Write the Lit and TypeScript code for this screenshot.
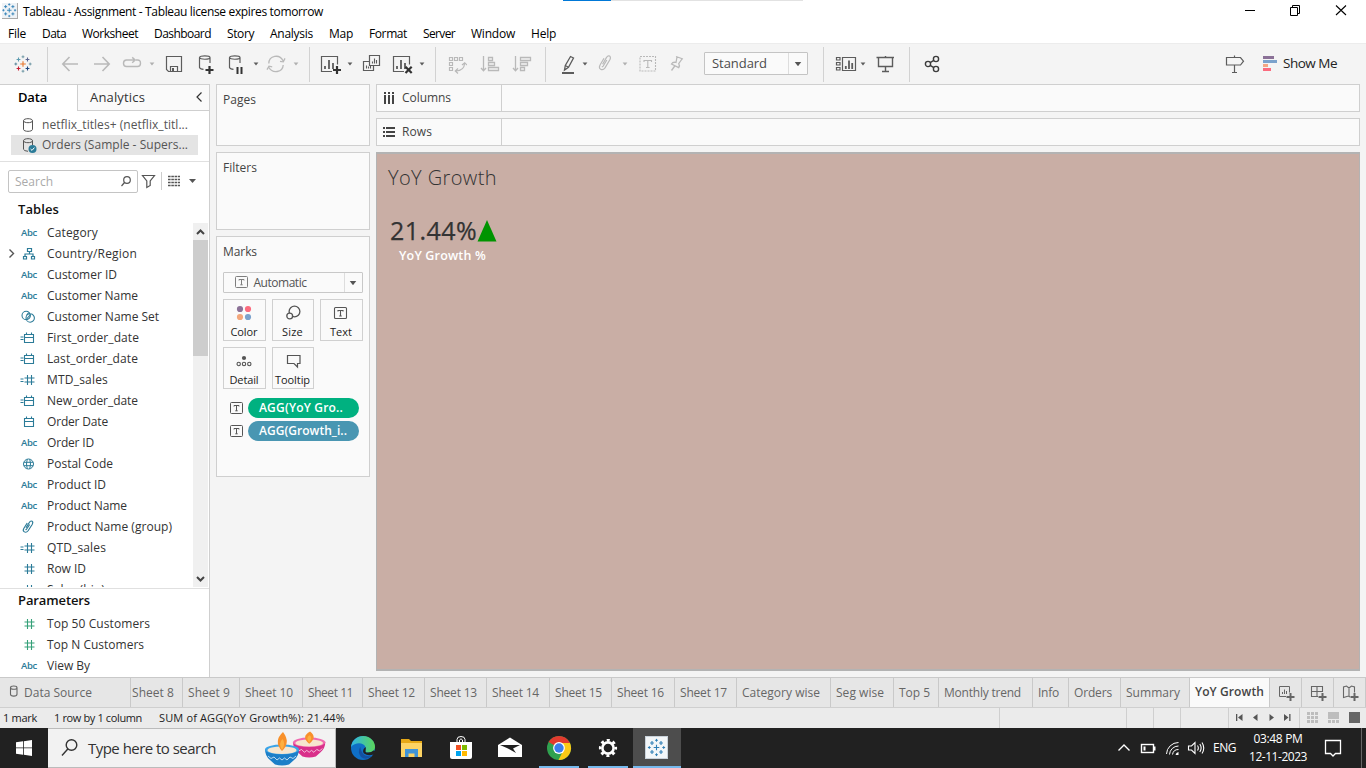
import { LitElement, html, css, svg, nothing } from "lit";
import { customElement, property } from "lit/decorators.js";

/** One line of text whose tracking is adjusted so that it fills a set width. */
@customElement("fit-text")
class FitText extends LitElement {
  static styles = css`
    :host { display: inline-block; white-space: pre; flex: none; }
    span { display: inline-block; }
  `;
  @property() text = "";
  @property({ type: Number }) w = 0;
  render() { return html`<span>${this.text}</span>`; }
  updated() {
    const el = this.renderRoot.querySelector("span") as HTMLElement;
    el.style.letterSpacing = "0";
    const natural = el.getBoundingClientRect().width;
    if (this.w && natural) el.style.letterSpacing = `${(this.w - natural) / this.text.length}px`;
  }
}

const t = (text: string, w: number) => html`<fit-text .text=${text} .w=${w}></fit-text>`;
const ic = (w: number, h: number, body: unknown, cls = "") =>
  html`<svg class="ic ${cls}" width=${w} height=${h} viewBox="0 0 ${w} ${h}">${body}</svg>`;
const p = (d: string, sw = 1.2) => svg`<path d=${d} stroke-width=${sw} />`;
const f = (d: string, fill = "currentColor") => svg`<path d=${d} fill=${fill} stroke="none" />`;

const cross = (x: number, y: number, r: number, color: string, sw = 1.2) =>
  svg`<path d="M${x - r} ${y}h${2 * r}M${x} ${y - r}v${2 * r}" stroke=${color} stroke-width=${sw} />`;
const logo = (c: string[]) => svg`
  ${cross(9, 9, 2.8, c[0], 1.1)}
  ${cross(4.5, 4.5, 1.9, c[1], 1.1)}${cross(13.5, 4.5, 1.9, c[2], 1.1)}
  ${cross(4.5, 13.5, 1.9, c[3], 1.1)}${cross(13.5, 13.5, 1.9, c[4], 1.1)}
  ${cross(9, 1.8, 1.4, c[5], 1)}${cross(9, 16.2, 1.4, c[5], 1)}
  ${cross(1.8, 9, 1.4, c[6], 1)}${cross(16.2, 9, 1.4, c[5], 1)}`;
const BLUE = Array(7).fill("#2f7fb5");

const caret = ic(6, 24, f("M0.6 10.6h4.8L3 13.6z"));
const cylinder = "M1.5 5.5C1.5 3.2 12 3.2 12 5.5S1.5 7.8 1.5 5.5V15.5Q2 17 5.5 17.4M12 5.5V11";
const chart = "M12 19.5H1.5V4.5H17.5V12.5";
const bars = "M5 17v-3M9 17V8M13 17v-6";
const clip = "M4.6 12.2L8.4 5.6Q10 3 11.6 4.1T11.7 8L7 15.9Q5 18.6 2.7 17.3T2.2 12.7L6 6.2M8.8 8L5.4 13.8Q4.6 15.2 3.9 14.4";

type Tool = [number, unknown, string?];
const DIV = html`<i class="vr"></i>`;
const TOOLS: Tool[] = [
  [14, ic(18, 24, svg`<g transform="translate(0 3)">${logo(["#e8762c", "#5c9bb0", "#5b6591", "#c72035", "#1f457e", "#7199a6", "#5b879b"])}</g>`)],
  [15, DIV],
  [13, ic(18, 24, p("M1.8 12H17M8.5 5L1.8 12L8.5 19", 1.6)), "off"],
  [14, ic(18, 24, p("M1 12H16.2M9.5 5L16.2 12L9.5 19", 1.6)), "off"],
  [11, ic(20, 24, p("M12 8H4.5Q1.5 8 1.5 11.2T4.5 14.5H15.5Q18.5 14.5 18.5 11.2T15.5 8H14M10.2 5.4L13.2 8L10.2 10.8", 1.4)), "off"],
  [7, caret, "off2"],
  [10, ic(18, 24, svg`${p("M1.5 4.5H16.5V19.5H3.5L1.5 17.5ZM5.5 19.5V14.5H12.5V19.5", 1.2)}${f("M7 16h2v3H7z")}`)],
  [15, ic(16, 24, svg`${p(cylinder)}${p("M11.5 14V22M7.5 18H15.5", 2.2)}`, "dk")],
  [14, ic(16, 24, svg`${p(cylinder)}${p("M9.5 15V22M13.5 15V22", 2)}`, "dk")],
  [9, caret],
  [7, ic(20, 24, p("M2.8 11.5C3 3.5 13.5 1.5 17 8.8M14 9.3L17.3 9.8L19 6.4M17.2 13C16.8 20.5 6.5 22 3 15.5M6.2 14.8L3 14.2L1 17.6", 1.3)), "off"],
  [7, caret, "off2"],
  [10, DIV],
  [10, ic(21, 24, svg`${p(chart)}${p(bars, 1.8)}${p("M17 14V22M13 18H21", 2.2)}`, "dk")],
  [6, caret],
  [9, ic(20, 24, svg`${p("M7.5 3.5H17.5V13.5H7.5ZM7.5 9.5H1.5V18.5H11.5V13.5")}${p("M10.5 11.5V9.5M12.5 11.5V6.5M14.5 11.5V8M4.5 16.5v-3M6.5 16.5v-2M8.5 16.5v-3", 1.1)}`)],
  [10, ic(21, 24, svg`${p(chart)}${p(bars, 1.8)}${p("M13.5 14.8L19.7 21M19.7 14.8L13.5 21", 2.2)}`, "dk")],
  [6, caret],
  [10, DIV],
  [12, ic(19, 24, svg`${p("M1.5 5.5h3v3h-3zM6.5 5.5h3v3h-3zM11.5 5.5h3v3h-3zM1.5 10.5h3v3h-3zM1.5 15.5h3v3h-3zM16.5 11V12Q16 18.5 8 19M14 13L16.7 10.7L19 13M10 16.5L7.3 19L10 21.5", 1.2)}`), "off"],
  [13, ic(20, 24, p("M3.5 4V18.5M1 16L3.5 18.7L6 16M8.5 5.5h4v3h-4zM8.5 10.5h6v3h-6zM8.5 15.5h10v3h-10z", 1.3)), "off"],
  [12, ic(20, 24, p("M3.5 4V18.5M1 16L3.5 18.7L6 16M8.5 5.5h10v3h-10zM8.5 10.5h7v3h-7zM8.5 15.5h4v3h-4z", 1.3)), "off"],
  [13, DIV],
  [15, ic(14, 24, svg`${p("M9.5 4.5L12.5 6L7.5 15.2L3.5 18L4.3 13.5ZM4.3 13.5L7.5 15.2M3 18.6L5 16.8", 1.3)}${p("M1 21H13", 2)}`)],
  [7, caret],
  [10, ic(14, 24, p(clip, 1.2)), "off"],
  [10, caret, "off2"],
  [11, ic(18, 24, svg`<rect x="1" y="4.5" width="15.5" height="14.5" stroke-width="1.1" stroke-dasharray="2 1" />${p("M5 10V8.5H12.5V10M8.8 8.5V15.5M7 15.5h3.6", 1.1)}`), "off"],
  [13, ic(14, 24, p("M6 4.5L13 7M7 5L6 10.5Q3 9.5 1.5 12L8.7 15.7Q10 13.5 8.7 11.7L12 7M4.8 14L1.5 18.5", 1.3)), "off"],
  [20, html`<div class="combo">${t("Standard", 55)}<b>${caret}</b></div>`],
  [15, DIV],
  [11, ic(22, 24, svg`${p("M1.5 5.5h3.5v2.5h-3.5zM1.5 10.5h3.5v2.5h-3.5zM1.5 15.5h3.5v2.5h-3.5zM7.5 5.5H20.5V18.5H7.5Z")}${p("M10.8 17v-3M14 17V8.5M17.2 17v-6", 1.8)}`)],
  [3, caret],
  [10, ic(20, 24, p("M.5 5.5H18M2.5 5.5V14.5H16.5V5.5M9.5 4V5M9.5 14.5V19.5M6 19.5H13", 1.4))],
  [13, DIV],
  [14, ic(16, 24, svg`<circle cx="4" cy="12" r="2.6" stroke-width="1.4" /><circle cx="12" cy="7" r="2.6" stroke-width="1.4" /><circle cx="12" cy="17" r="2.6" stroke-width="1.4" />${p("M6.2 10.6L9.8 8.4M6.2 13.4L9.8 15.6", 1.4)}`, "blk")],
  [285, ic(20, 24, p("M9.5 3.5V5.5M9.5 13V20.5M7 20.5H12M1.5 5.5H15.5L18.5 9.2L15.500 13H1.5Z", 1.2))],
  [18, ic(14, 24, svg`${f("M0 4h11v3H0z", "#8b7197")}${f("M0 8h14v3H0z", "#7ba2cc")}${f("M0 12h5v3H0z", "#f3a683")}${f("M0 16h8v3H0z", "#fb6b7e")}`)],
  [6, html`<span class="show">${t("Show Me", 54)}</span>`],
];

const MENU: [string, number, number][] = [
  ["File", 8, 18], ["Data", 16, 24], ["Worksheet", 16, 56], ["Dashboard", 16, 57], ["Story", 16, 27],
  ["Analysis", 16, 43], ["Map", 16, 24], ["Format", 16, 38], ["Server", 16, 32], ["Window", 16, 44], ["Help", 16, 25],
];

const hash = "M10.5 4V14M14.5 4V14M7.5 7H17.5M7.5 11H17.5";
const cal = "M7.5 5.5H16.5V13.5H7.5ZM7.5 8.5H16.5M9.5 3.5V5.5M14.5 3.5V5.5";
const eq = "M3.5 8h3M3.5 10.5h3";
const GLYPH: Record<string, unknown> = {
  abc: html`<span class="abc">${t("Abc", 16)}</span>`,
  tree: ic(20, 18, p("M10.5 3.5h4v3h-4zM6.5 11.5h3v2.5h-3zM14.5 11.5h3v2.5h-3zM12.5 6.5V9M8 11.5V9H16V11.5")),
  set: ic(20, 18, p("M5 7.5a4.2 4.2 0 1 0 8.4 0a4.2 4.2 0 1 0-8.4 0M9 10a4.2 4.2 0 1 0 8.4 0a4.2 4.2 0 1 0-8.4 0M9.300 7.500l2-2.500M10 10.500l3.500-4", 1.1)),
  cal: ic(20, 18, p(cal, 1.1)),
  ecal: ic(20, 18, p(cal + eq, 1.1)),
  num: ic(20, 18, p(hash, 1.1)),
  enum: ic(20, 18, p(hash + eq, 1.1)),
  globe: ic(20, 18, p("M6.5 9a5 5 0 1 0 10 0a5 5 0 1 0-10 0M7 7.3H16M7 10.7H16M10.2 4.2Q8.8 9 10.2 13.8M12.8 4.2Q14.2 9 12.8 13.8", 1)),
  clip: ic(20, 18, svg`<g transform="translate(5 0) scale(.87 .8)">${p(clip, 1.3)}</g>`),
};
const FIELDS: [string, string, number][] = [
  ["abc", "Category", 51], ["tree", "Country/Region", 90], ["abc", "Customer ID", 70], ["abc", "Customer Name", 91],
  ["set", "Customer Name Set", 112], ["ecal", "First_order_date", 92], ["ecal", "Last_order_date", 91], ["enum", "MTD_sales", 61],
  ["ecal", "New_order_date", 91], ["cal", "Order Date", 61], ["abc", "Order ID", 47], ["globe", "Postal Code", 66],
  ["abc", "Product ID", 59], ["abc", "Product Name", 80], ["clip", "Product Name (group)", 125], ["enum", "QTD_sales", 59],
  ["num", "Row ID", 39], ["enum", "Sales (bin)", 58],
];
const PARAMS: [string, string, number][] = [["num", "Top 50 Customers", 103], ["num", "Top N Customers", 97], ["abc", "View By", 43]];

// name, tab width, space before the text, text width
const TABS: [string, number, number, number][] = [
  ["Sheet 8", 52, 1, 42], ["Sheet 9", 57, 5, 42], ["Sheet 10", 63, 5, 48], ["Sheet 11", 60, 5, 45], ["Sheet 12", 62, 5, 47],
  ["Sheet 13", 62, 5, 47], ["Sheet 14", 63, 5, 47], ["Sheet 15", 62, 5, 47], ["Sheet 16", 63, 5, 47], ["Sheet 17", 62, 5, 47],
  ["Category wise", 94, 5, 78], ["Seg wise", 63, 5, 48], ["Top 5", 45, 5, 31], ["Monthly trend", 94, 5, 77], ["Info", 36, 5, 21],
  ["Orders", 52, 5, 38], ["Summary", 69, 5, 54],
];

const tBox = ic(13, 12, svg`<rect x=".5" y=".5" width="12" height="11" rx="1" stroke-width="1" />${p("M4 4.5V3.5H9V4.5M6.5 3.5V8.8M5.3 8.8h2.4", 1)}`);
const plusBox = "M12.5 9V17M8.5 13H16.5";

@customElement("app-root")
class AppRoot extends LitElement {
  static styles = css`
    :host { display: flex; flex-direction: column; width: 1366px; height: 768px; overflow: hidden; background: #f4f4f4;
      font: 12px/20px "Open Sans", "Noto Sans", sans-serif; color: #333; }
    * { box-sizing: border-box; }
    svg { display: block; flex: none; fill: none; stroke: currentColor; }
    .title { display: flex; height: 23px; background: #fff; color: #000; position: relative; }
    .title .app { margin: 3px 5px 0 2px; background: #eef2f6; border-right: 1px solid #aaa; border-bottom: 1px solid #aaa; }
    .title .name { padding-top: 2px; flex: 1; }
    .strip { position: absolute; top: 0; left: 563px; display: flex; }
    .strip i { width: 48px; height: 1px; background: #0078d7; }
    .strip i + i { width: 192px; background: #e2e2e2; }
    .wins { display: flex; gap: 30px; padding: 3px 17px 0 0; }
    .menu { display: flex; height: 20px; padding-top: 1px; background: #fff; color: #000; }
    .tools { display: flex; height: 41px; padding-top: 8px; align-items: flex-start; color: #5c5c5c; border-top: 1px solid #ececec; flex: none; }
    .off { color: #b9b9b9; } .off2 { color: #b0b0b0; }
    .blk { color: #3c3c3c; }
    .dk path:last-child { stroke: #333; }
    .vr { display: block; width: 1px; height: 35px; background: #d2d2d2; margin-top: -5px; }
    .combo { display: flex; width: 104px; height: 23px; background: #fafafa; border: 1px solid #c4c4c4; border-radius: 1px; padding-left: 7px; font-size: 13px; line-height: 20px; justify-content: space-between; color: #4c4c4c; }
    .combo b { width: 19px; border-left: 1px solid #ddd; padding: 0 6px; display: flex; align-items: center; color: #555; }
    .combo b svg { transform: scale(1.35); }
    .show { font-size: 13.5px; line-height: 22px; color: #222; }
    .main { display: flex; height: 593px; flex: none; }
    .data { width: 210px; background: #fff; border-top: 1px solid #cfcfcf; border-right: 1px solid #cfcfcf; overflow: hidden; display: flex; flex-direction: column; }
    .heads { display: flex; height: 26px; flex: none; line-height: 25px; font-size: 13px; }
    .heads .on { width: 77px; padding-left: 18px; font-weight: 600; color: #000; }
    .heads .an { flex: 1; display: flex; justify-content: space-between; padding: 0 6px 0 12px; border-left: 1px solid #cfcfcf; border-bottom: 1px solid #cfcfcf; background: #fafafa; }
    .src { padding: 4px 11px 6px; height: 51px; border-bottom: 1px solid #e0e0e0; flex: none; color: #555; }
    .src div { display: flex; height: 20px; padding-left: 10px; gap: 5px; align-items: center; }
    .src .sel { background: #e4e4e4; }
    .find { display: flex; padding: 8px 0 0 8px; height: 31px; flex: none; align-items: flex-start; color: #555; }
    .box { display: flex; width: 130px; height: 23px; border: 1px solid #c4c4c4; border-radius: 2px; justify-content: space-between; padding: 0 6px; line-height: 22px; color: #aaa; }
    .box svg { color: #555; }
    .h { font-size: 13px; font-weight: 600; color: #111; padding-left: 18px; flex: none; }
    .tb { height: 29px; line-height: 32px; }
    .scroll { display: flex; height: 365px; flex: none; overflow: hidden; }
    .list { flex: 1; }
    .row { display: flex; height: 21px; align-items: center; color: #333; }
    .row .ex { width: 17px; padding-left: 8px; color: #555; }
    .row .gl { width: 30px; color: #2b7b98; display: flex; }
    .pr .row .gl { color: #35a078; } .pr .row:last-child .gl { color: #2b7b98; }
    .abc { font-size: 9.5px; font-weight: 600; padding-left: 4px; line-height: 18px; padding-top: 1px; }
    .bar { width: 15px; margin: 1px 1px 0 0; background: #f0f0f0; display: flex; flex-direction: column; color: #444; }
    .bar i { height: 116px; background: #cdcdcd; margin-bottom: auto; }
    .pr { border-top: 1px solid #e0e0e0; margin-top: 1px; }
    .pr .h { height: 24px; line-height: 23px; }
    .cards { width: 160px; padding-left: 6px; display: flex; flex-direction: column; gap: 6px; flex: none; color: #444; }
    .card { border: 1px solid #cfcfcf; background: #fafafa; padding: 5px 6px; flex: none; }
    .pages { height: 62px; } .filters { height: 78px; } .marks { height: 241px; }
    .type { display: flex; justify-content: space-between; height: 21px; margin-top: 10px; border: 1px solid #c8c8c8; line-height: 20px; padding-left: 11px; color: #555; border-radius: 1px; }
    .type > svg { margin: 3px 0 0; opacity: .75; }
    .type fit-text { margin-right: 32px; }
    .type b { width: 18px; border-left: 1px solid #ddd; padding-left: 5px; }
    .type b svg { margin-top: -2px; transform: scale(1.35); }
    .btns { display: grid; grid-template-columns: 43px 42px 43px; grid-auto-rows: 42px; gap: 6px; margin-top: 6px; }
    .btn { border: 1px solid #d0d0d0; display: flex; flex-direction: column; align-items: center; font-size: 11px; line-height: 16px; padding: 3px 1px 0 0; gap: 3px; color: #555; }
    .btn fit-text { color: #222; }
    .pill { display: flex; align-items: center; margin: 9px 0 0 7px; gap: 5px; color: #555; }
    .pill + .pill { margin-top: 3px; }
    .pill span { width: 111px; height: 20px; border-radius: 10px; background: #00b180; color: #fff; padding-left: 11px; line-height: 19px; font-weight: 600; }
    .pill .bl { background: #4996b2; }
    .sheet { flex: 1; padding: 0 6px; display: flex; flex-direction: column; gap: 6px; }
    .shelf { display: flex; height: 28px; border: 1px solid #cfcfcf; background: #fafafa; flex: none; line-height: 25px; color: #444; }
    .shelf div { width: 125px; border-right: 1px solid #cfcfcf; display: flex; gap: 6px; padding: 0 0 1px 6px; align-items: center; }
    .view { height: 519px; background: #c9aea5; border: 1px solid #b3b3b3; border-bottom-width: 2px; border-top-width: 2px; padding: 9px 0 0 11px; }
    .vt { font-size: 20px; line-height: 30px; font-weight: 300; color: #333; }
    .kpi { display: flex; height: 40px; margin-top: 18px; padding-left: 2px; font-size: 25px; line-height: 39px; color: #333; -webkit-text-stroke: .25px #333; }
    .kpi svg { margin-top: 9px; }
    .sub { color: #fff; font-size: 12.5px; font-weight: 600; line-height: 20px; padding-left: 11px; margin-top: -5px; }
    .tabs { display: flex; height: 31px; flex: none; border-top: 1px solid #c9c9c9; border-bottom: 1px solid #cfcfcf; background: #e6e6e6; color: #666; line-height: 29px; }
    .tabs > div { border-right: 1px solid #c9c9c9; flex: none; overflow: hidden; display: flex; }
    .ds { width: 131px; padding-left: 9px; gap: 5px; }
    .tabs .act { width: 80px; background: #fafafa; padding-left: 5px; font-weight: 600; color: #444; line-height: 27px; }
    .tabs .nw { width: 32px; padding: 6px 0 0 8px; }
    .status { display: flex; height: 20px; flex: none; background: #ebebeb; font-size: 11px; line-height: 19px; color: #222; }
    .s0 { width: 999px; padding-left: 3px; display: flex; gap: 17px; }
    .status > i { border-left: 1px solid #cfcfcf; width: 27px; } .status > i:first-of-type { width: 127px; } .status > .w48 { width: 48px; }
    .nav { border-left: 1px solid #cfcfcf; width: 71px; color: #555; padding-top: 1px; }
    .vw { border-left: 1px solid #cfcfcf; }
    .task { display: flex; height: 40px; flex: none; background: #212121; color: #fff; }
    .start { width: 48px; padding: 12px 0 0 16px; }
    .tsearch { width: 288px; height: 40px; background: #f2f2f2; border: 1px solid #bbb; border-left: 0; color: #333; display: flex; font-size: 15px; line-height: 39px; padding-left: 13px; }
    .tsearch fit-text { margin: 0 auto 0 10px; }
    .apps { display: flex; margin-left: 3px; }
    .apps div { width: 48.75px; height: 40px; padding: 7px 0 0 12px; flex: none; }
    .apps .run { box-shadow: inset 0 -2px #76b9ed; width: 40px; margin: 0 4px 0 5px; padding-left: 7px; }
    .apps .cur { box-shadow: inset 0 -2px #76b9ed; background: #4d4d4d; width: 48px; margin-left: 1px; padding-left: 11px; }
    .tray { margin-left: auto; display: flex; align-items: center; }
    .tray > svg { margin-right: 8px; }
    .clock { display: flex; flex-direction: column; align-items: center; line-height: 18px; margin: 0 17px 0 13px; }
    .tray > .note { margin-right: 0; }
    .end { width: 5px; height: 40px; border-left: 1px solid #666; margin-left: 19px; }
  `;

  row([g, n, w]: [string, string, number]) {
    return html`<div class="row"><span class="ex">${g === "tree" ? ic(7, 9, p("M1.5 .5L5.5 4.5L1.5 8.5", 1.4)) : nothing}</span><span class="gl">${GLYPH[g]}</span>${t(n, w)}</div>`;
  }

  lamp(x: number, y: number, s: number, a: string, b: string, flame: number) {
    return svg`<g stroke="none" transform="translate(${x} ${y}) scale(${s})">
      <path d="M0 3Q0 10 5 14L10 18.500Q17 20.500 24 18.500L29 14Q34 10 34 3Q17 9 0 3" fill=${a} />
      <ellipse cx="17" cy="3.500" rx="17" ry="5" fill=${b} /><ellipse cx="17" cy="4.200" rx="14.500" ry="3.800" fill="#f6e6cf" />
      <path d="M17 5Q8 ${-flame / 3} 18 ${-flame}Q26 ${-flame / 4} 17 5" fill="#f8902a" />
      <path d="M17 4Q13 ${-flame / 5} 17.500 ${-flame / 2}Q21 ${-flame / 5} 17 4" fill="#fdb040" />
      <path d="M3 10l3 2.500 3-1.500 3 3 2.500-2 2.500 2 2.500-2 2.500 2 3-3 3 1.500 3-2.500" fill="none" stroke="#fff" stroke-width="1" opacity=".7" /></g>`;
  }

  render() {
    return html`
      <div class="title">
        <div class="strip"><i></i><i></i></div>
        ${ic(16, 16, svg`<g transform="scale(.86)">${logo(BLUE)}</g>`, "app")}
        <span class="name">${t("Tableau - Assignment - Tableau license expires tomorrow", 300)}</span>
        <div class="wins">
          ${ic(16, 16, p("M4 7.5H14", 1))}
          ${ic(16, 16, p("M3.5 4.5H10.5V12.5H3.5ZM5.5 4.5V2.5H12.5V10.5H10.5", 1))}
          ${ic(16, 16, p("M3 2.500L13 12M13 2.500L3 12", 1.1))}
        </div>
      </div>
      <div class="menu">${MENU.map(([n, g, w]) => html`<span style="margin-left:${g}px">${t(n, w)}</span>`)}</div>
      <div class="tools">${TOOLS.map(([g, c, k]) => html`<div class=${k ?? ""} style="margin-left:${g}px">${c}</div>`)}</div>

      <div class="main">
        <div class="data">
          <div class="heads">
            <div class="on">${t("Data", 29)}</div>
            <div class="an">${t("Analytics", 55)}${ic(8, 22, p("M6.5 7.5L2 12L6.5 16.5", 1.2))}</div>
          </div>
          <div class="src">
            <div>${ic(16, 16, p("M2.5 3.7C2.5 1 11.5 1 11.5 3.7S2.5 6.3 2.5 3.7V12.3C2.5 15 11.5 15 11.5 12.3V3.7", 1))}${t("netflix_titles+ (netflix_titl...", 146)}</div>
            <div class="sel">${ic(16, 16, svg`${p("M2.5 3.7C2.5 1 11.5 1 11.5 3.7S2.5 6.3 2.5 3.7V12.3Q3 14 7 14.3M11.5 3.7V8", 1)}<circle cx="11.5" cy="12" r="4" fill="#2b7b98" stroke="none" /><path d="M9.6 12l1.4 1.4 2.4-2.8" stroke="#fff" />`)}${t("Orders (Sample - Supers...", 146)}</div>
          </div>
          <div class="find">
            <div class="box">${t("Search", 38)}${ic(10, 22, svg`<circle cx="6" cy="9" r="3.3" stroke-width="1.2" />${p("M3.5 11.5L.5 15")}`)}</div>
            ${ic(70, 22, svg`${p("M4.5 5.5H16.5L12.2 11V15.5L8.8 17.5V11Z", 1.2)}<path d="M23.5 2V20" stroke="#ccc" /><path d="M30 6.5H42M30 9.5H42M30 12.5H42M30 15.5H42" stroke-dasharray="2.600 .7" stroke-width="1.300" />${f("M51 9h7l-3.5 4z")}`)}
          </div>
          <div class="h tb">${t("Tables", 41)}</div>
          <div class="scroll">
            <div class="list">${FIELDS.map((r) => this.row(r))}</div>
            <div class="bar">${ic(15, 17, p("M4 11L7.5 7.500L11 11", 2))}<i></i>${ic(15, 17, p("M4 7L7.5 10.5L11 7", 2))}</div>
          </div>
          <div class="pr"><div class="h">${t("Parameters", 72)}</div><div>${PARAMS.map((r) => this.row(r))}</div></div>
        </div>

        <div class="cards">
          <div class="card pages">${t("Pages", 33)}</div>
          <div class="card filters">${t("Filters", 34)}</div>
          <div class="card marks">
            ${t("Marks", 34)}
            <div class="type">${tBox}${t("Automatic", 53)}<b>${caret}</b></div>
            <div class="btns">
              <div class="btn">${ic(16, 18, svg`<g stroke="none"><circle cx="4" cy="6" r="3.1" fill="#8b7197" /><circle cx="12" cy="6" r="3.1" fill="#fb6b7e" /><circle cx="4" cy="14" r="3.1" fill="#f3a77c" /><circle cx="12" cy="14" r="3.1" fill="#7ba2cc" /></g>`)}${t("Color", 27)}</div>
              <div class="btn">${ic(16, 18, svg`<circle cx="9.500" cy="8.500" r="5.4" stroke-width="1.3" /><circle cx="4.7" cy="13" r="2.9" fill="#fafafa" stroke-width="1.3" />`)}${t("Size", 21)}</div>
              <div class="btn">${ic(16, 18, svg`<rect x="1.5" y="4.5" width="12" height="11" rx="1" stroke-width="1.1" />${p("M5 8.5V7.5H10V8.5M7.5 7.5V13M6.2 13h2.6", 1.1)}`)}${t("Text", 22)}</div>
              <div class="btn">${ic(16, 18, svg`<circle cx="8" cy="7" r="2.1" fill="#555" stroke="none" /><circle cx="2.7" cy="13" r="1.7" stroke-width="1.1" /><circle cx="8" cy="13" r="1.7" stroke-width="1.1" /><circle cx="13.3" cy="13" r="1.7" stroke-width="1.1" />`)}${t("Detail", 29)}</div>
              <div class="btn">${ic(16, 18, p("M2.500 4.5H15V12.5H12.500V16L9 12.5H2.500Z", 1.2))}${t("Tooltip", 35)}</div>
            </div>
            <div class="pill">${tBox}<span>${t("AGG(YoY Gro..", 84)}</span></div>
            <div class="pill">${tBox}<span class="bl">${t("AGG(Growth_i..", 88)}</span></div>
          </div>
        </div>

        <div class="sheet">
          <div class="shelf"><div>${ic(13, 14, svg`${f("M1 1h2v2H1zM5 1h2v2H5zM9 1h2v2H9zM1 4h2v9H1zM5 4h2v9H5zM9 4h2v9H9z")}`)}${t("Columns", 49)}</div></div>
          <div class="shelf"><div>${ic(13, 14, svg`${f("M0 2h2v2H0zM0 6h2v2H0zM0 10h2v2H0zM3 2h9v2H3zM3 6h9v2H3zM3 10h9v2H3z")}`)}${t("Rows", 30)}</div></div>
          <div class="view">
            <div class="vt">${t("YoY Growth", 109)}</div>
            <div class="kpi">${t("21.44%", 87)}${ic(20, 22, f("M10 0L19.5 21.5H.5z", "#009400"))}</div>
            <div class="sub">${t("YoY Growth %", 87)}</div>
          </div>
        </div>
      </div>

      <div class="tabs">
        <div class="ds">${ic(10, 28, p("M1.5 9.7C1.5 7.5 8 7.5 8 9.7S1.5 11.6 1.5 9.7V16.3C1.5 18.7 8 18.7 8 16.3V9.7", 1.1))}${t("Data Source", 68)}</div>
        ${TABS.map(([n, w, g, tw]) => html`<div style="width:${w}px;padding-left:${g}px">${t(n, tw)}</div>`)}
        <div class="act">${t("YoY Growth", 69)}</div>
        <div class="nw">${ic(18, 18, svg`${p("M8 12.5H1.5V2.5H11.5V8.5M4.5 10V8M6.5 10V5.5M8.5 10V7", 1)}${p(plusBox, 2)}`)}</div>
        <div class="nw">${ic(18, 18, svg`${p("M8 12.5H1.5V2.5H12.5V8M1.5 7.5H12.5M7 2.5V12.5", 1.1)}${p(plusBox, 2)}`)}</div>
        <div class="nw">${ic(18, 18, svg`${p("M8 13L6.5 12L1.5 13.5V3L4.5 2L7 4L9.5 2L12.5 3V8.5M7 4V12", 1.1)}${p(plusBox, 2)}`)}</div>
      </div>

      <div class="status">
        <div class="s0">${t("1 mark", 34)}${t("1 row by 1 column", 88)}${t("SUM of AGG(YoY Growth%): 21.44%", 186)}</div>
        <i></i><i></i><i></i><i class="w48"></i>
        <div class="nav">${ic(64, 18, f("M7 5h1.3v7H7zM13.500 5v7L9 8.500zM28.500 5v7L24 8.500zM40.500 5v7L45 8.500zM55 5v7L59.500 8.500zM60.200 5h1.300v7H60.200z"))}</div>
        <div class="vw">${ic(64, 19, svg`
          ${f("M7 4h3v3H7zM11 4h3v3h-3zM15 4h3v3h-3zM7 8h3v3H7zM11 8h3v3h-3zM15 8h3v3h-3zM7 12h3v3H7zM11 12h3v3h-3zM15 12h3v3h-3zM28 4h11v7H28zM28 12h3v3h-3zM32 12h3v3h-3zM36 12h3v3h-3z", "#bdbdbd")}
          ${f("M49 4h11v11H49z", "#666")}`)}</div>
      </div>

      <div class="task">
        <div class="start">${ic(16, 16, f("M0 2.300L7 1.300V7.500H0zM7.800 1.200L16 0V7.500H7.800zM0 8.300H7V14.700L0 13.700zM7.800 8.300H16V16L7.800 14.800z"))}</div>
        <div class="tsearch">
          ${ic(17, 38, svg`<circle cx="10.500" cy="16" r="5.300" stroke-width="1.400" />${p("M6.800 20L1 26.500", 1.4)}`)}
          ${t("Type here to search", 128)}
          ${ic(70, 38, svg`${this.lamp(28, 10, 0.95, "#d92f8a", "#f06ab0", 8)}${this.lamp(0, 17, 1, "#1c7fc8", "#3ba4e8", 14)}`)}
        </div>
        <div class="apps">
          <div>${ic(24, 26, svg`<defs>
            <linearGradient id="eg" x1="0" x2="1"><stop offset="0" stop-color="#2fb4e8" /><stop offset="1" stop-color="#5bd65a" /></linearGradient></defs>
            <g stroke="none"><circle cx="12" cy="13" r="12" fill="#0f6fc6" />
            <path d="M0 12C1 5 6 1 12 1C20 1 24 7 24 12C24 16 20 18 16 17.500C13 17 15.500 15 14.500 12C12.500 7 4 7 0 12" fill="url(#eg)" />
            <path d="M14.500 12C15.500 15 13 17 16 17.500Q20 18 22.500 15.500L24.500 16L22.500 19.500Q17 21.500 13 18.500Q10.500 15 14.500 12" fill="#212121" />
            <path d="M9.500 11.500Q6 17 10 22Q15 26 21 21Q14 22 11.500 18T9.500 11.500" fill="#1450a0" /></g>`)}</div>
          <div>${ic(24, 26, svg`${f("M1 4H9L11 6H22V22H1z", "#e6a817")}${f("M1 8H22V22H1z", "#fcd364")}${f("M5 14H18V22H14.500V18.500H8.500V22H5z", "#3f94d8")}`)}</div>
          <div>${ic(24, 26, svg`${p("M8 7V4.500Q8 1.500 12 1.500T16 4.500V7M10.500 7V5Q12 2.500 13.500 5V7", 1)}${f("M1 7H23V22Q23 24 21 24H3Q1 24 1 22z")}${f("M7 10h5v5H7z", "#f25022")}${f("M13 10h5v5h-5z", "#7fba00")}${f("M7 16h5v5H7z", "#00a4ef")}${f("M13 16h5v5h-5z", "#ffb900")}`)}</div>
          <div>${ic(26, 26, svg`${f("M1 10L13 2.500L25 10V22H1z")}${f("M3 10H23L16 13.500L19 18L11 13.500z", "#212121")}`)}</div>
          <div class="run">${ic(26, 26, svg`<g stroke="none"><circle cx="13" cy="13" r="12" fill="#2fa14f" /><path d="M13 13L2.600 7A12 12 0 0 1 23.400 7L24 8H13z" fill="#e23a2e" /><path d="M13 13V8H24A12 12 0 0 1 12.500 25L17.500 15z" fill="#fbc916" /><circle cx="13" cy="13" r="5.900" fill="#fff" /><circle cx="13" cy="13" r="4.700" fill="#3b7ded" /></g>`)}</div>
          <div class="run">${ic(26, 26, svg`<circle cx="13" cy="13" r="5.600" stroke-width="2.600" /><circle cx="13" cy="13" r="7.800" stroke-width="2.600" stroke-dasharray="3 3.126" stroke-dashoffset="1.500" />`)}</div>
          <div class="cur">${ic(24, 26, svg`<rect x="1.500" y="1.500" width="22" height="22" fill="#f3f6f8" stroke="#c9d2da" /><g transform="translate(3.500 3.500)">${logo(BLUE)}</g>`)}</div>
        </div>
        <div class="tray">
          ${ic(14, 14, p("M1.500 9.500L7 4L12.500 9.500", 1.4))}
          ${ic(18, 14, svg`<rect x="2.500" y="3.500" width="12" height="8" stroke-width="1.400" />${f("M4.500 5.500h2v4h-2zM15 5.500h1.500v4H15z")}`)}
          ${ic(14, 16, svg`${p("M1.500 14A12 12 0 0 1 13.500 2.500M4.500 14.500A9 9 0 0 1 13.500 6M7.500 14.500A6 6 0 0 1 13.500 9.500", 1)}${f("M10.500 15a4 4 0 0 1 3-3v3z")}`)}
          ${ic(18, 16, p("M1.500 6H4.500L8 2.500V13.500L4.500 10H1.500ZM10.500 5.500Q12.200 8 10.500 10.500M12.800 4Q15.500 8 12.800 12M15 2.500Q18.500 8 15 13.500", 1.1))}
          ${t("ENG", 23)}
          <div class="clock">${t("03:48 PM", 49)}${t("12-11-2023", 58)}</div>
          ${ic(18, 20, p("M1.500 2.500H16.500V15.500H11.500L9 18L6.500 15.500H1.500Z", 1.3), "note")}
          <i class="end"></i>
        </div>
      </div>
    `;
  }
}
